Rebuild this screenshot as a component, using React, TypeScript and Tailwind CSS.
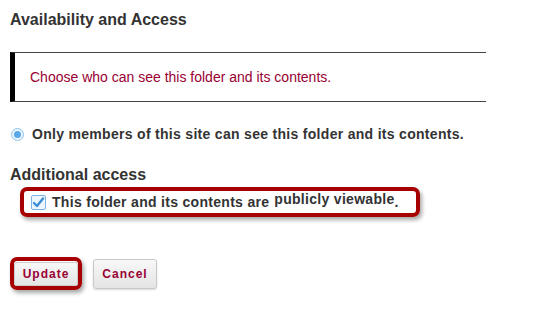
import React from 'react';

const App = () => {
    return (
        <div className="w-[538px] h-[313px] bg-white text-[#333] overflow-hidden" style={{fontFamily: '"Liberation Sans", Arial, sans-serif'}}>
            <div className="pl-[10px] pt-[11px]">
                <h2 className="text-[16px] font-bold leading-[18px]">Availability and Access</h2>

                <div className="mt-[23px] w-[476px] h-[50px] border-y border-[#444] border-l-[5px] border-l-black flex items-center pl-[15px]">
                    <p className="text-[14px] text-[#990033]">Choose who can see this folder and its contents.</p>
                </div>

                <div className="mt-[22px] flex items-center gap-[8px] pl-[1px]">
                    <span className="w-[13px] h-[13px] rounded-full border border-[#8ec3ee] bg-[#eaf4fd] flex items-center justify-center">
                        <span className="w-[7px] h-[7px] rounded-full bg-[#5ba8e8]" />
                    </span>
                    <span className="text-[14px] font-bold tracking-[0.3px]">Only members of this site can see this folder and its contents.</span>
                </div>

                <h3 className="mt-[21px] text-[16px] font-bold leading-[18px]">Additional access</h3>

                <div className="mt-[3px] ml-[10px] w-[400px] h-[30px] border-[4px] border-[#a60000] rounded-[7px] shadow-[2px_3px_4px_rgba(0,0,0,0.35)] flex items-center pl-[7px]">
                    <span className="w-[15px] h-[15px] rounded-[2px] border border-[#7eb4e2] bg-[#eef6fd] flex items-center justify-center">
                        <svg width="13" height="13" viewBox="0 0 13 13">
                            <path d="M2 7 L5 10 L11 2.5" fill="none" stroke="#3c8fd6" strokeWidth="2.4" strokeLinecap="round" strokeLinejoin="round" />
                        </svg>
                    </span>
                    <span className="ml-[6px] text-[14px] font-bold tracking-[0.3px]">This folder and its contents are</span>
                    <span className="ml-[5px] text-[14px] font-bold tracking-[0.3px] relative -top-[3px]">publicly viewable</span>
                    <span className="text-[14px] font-bold">.</span>
                </div>

                <div className="mt-[40px] flex items-center gap-[11px]">
                    <div className="border-[4px] border-[#a60000] rounded-[7px] shadow-[2px_3px_4px_rgba(0,0,0,0.35)]">
                        <button className="h-[24px] w-[64px] rounded-[3px] bg-gradient-to-b from-[#f8f8f8] to-[#e4e4e4] border border-[#ccc] text-[12px] font-bold tracking-[1px] text-[#990033]">Update</button>
                    </div>
                    <button className="h-[30px] w-[64px] rounded-[3px] bg-gradient-to-b from-[#f8f8f8] to-[#e4e4e4] border border-[#c8c8c8] shadow-[0_1px_2px_rgba(0,0,0,0.15)] text-[12px] font-bold tracking-[1px] text-[#990033]">Cancel</button>
                </div>
            </div>
        </div>
    );
};

export default App;
